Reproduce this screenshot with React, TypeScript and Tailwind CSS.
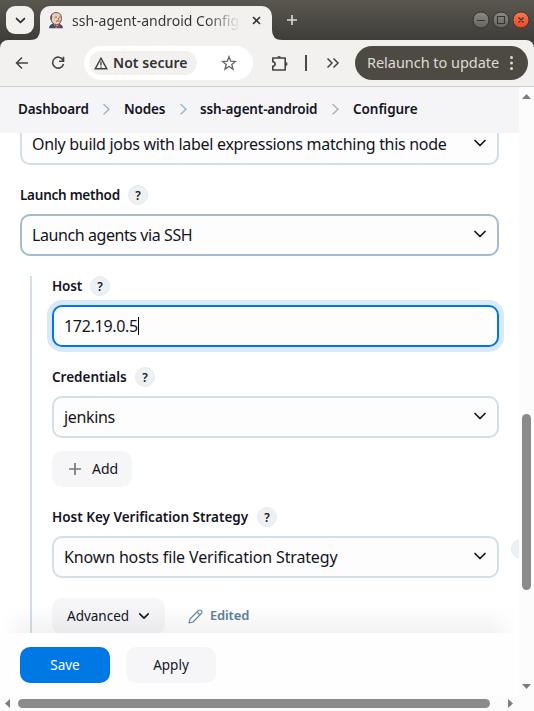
import type { ReactNode } from "react";

function Chevron({ className = "", size = 14, stroke = 1.9 }: { className?: string; size?: number; stroke?: number }) {
  return (
    <svg className={className} width={size} height={size} viewBox="0 0 14 14" fill="none" stroke="currentColor" strokeWidth={stroke} strokeLinecap="round" strokeLinejoin="round">
      <path d="M2 4.500 7 9.500 12 4.500" />
    </svg>
  );
}

function JenkinsIcon() {
  return (
    <svg width="16" height="17" viewBox="0 0 16 17" className="shrink-0">
      <path d="M1 16.2c.2-2.600 1.600-3.900 4.200-4.700l6 .2c2.300.7 3.500 2 3.800 4.500z" fill="#31516a" />
      <path d="M5.500 11.300 8 16.200l3.200-4.600z" fill="#f5f1ed" />
      <path d="M3 6.800C2.500 3 4.700.6 8 .6c3.500 0 5.700 2.300 5.400 6-.1 3.600-1.600 6-4.800 6C5.400 12.600 3.200 10.300 3 6.800z" fill="#e9ccb3" stroke="#49372f" strokeWidth=".8" />
      <path d="M3 8.200C1.800 7.200 2 3.300 4.100 2c-.2 1.700.5 3-.2 4.200z" fill="#65564d" />
      <path d="M6.800 5.300 8.900 5M11 5l1.600.2M8.100 9.300c1.200-.5 2.500-.5 3.500 0M10.200 6.100l.5 1.600" stroke="#67483a" strokeWidth=".8" fill="none" />
      <path d="m7 12.700 2.200 1 2.600-1.200v3l-2.500-.8L7 15.800z" fill="#d52c34" />
    </svg>
  );
}

function Help() {
  return (
    <span className="flex size-5 items-center justify-center rounded-full border border-[#e6ebef] bg-[#edf1f4] pt-px text-[12px] font-semibold leading-none text-[#14141f]">
      ?
    </span>
  );
}

function Label({ children, width }: { children: ReactNode; width: string }) {
  return (
    <div className="flex h-5 items-center gap-2">
      <span className={`${width} whitespace-nowrap text-[13.5px] font-semibold leading-5`}>{children}</span>
      <Help />
    </div>
  );
}

function Select({ children, border = "border-[#d3dee6]" }: { children: ReactNode; border?: string }) {
  return (
    <div className={`flex h-[42px] shrink-0 items-center justify-between rounded-[10px] border-2 bg-[#fdfdfd] pl-2.5 pr-[10px] ${border}`}>
      <span className="whitespace-nowrap text-[16px]">{children}</span>
      <Chevron size={14} stroke={1.7} className="mb-0.5" />
    </div>
  );
}

function TitleBar() {
  return (
    <div className="flex h-10 bg-gradient-to-b from-[#5a5750] to-[#3f3d38]">
      <div className="flex w-10 justify-center pt-1.5">
        <div className="flex size-7 items-center justify-center rounded-[9px] bg-[#f2f1f0] text-[#2d2d2d]">
          <Chevron size={11} stroke={2.2} />
        </div>
      </div>
      <div className="relative mt-1.5 flex h-[34px] w-[232px] items-center rounded-t-[10px] bg-[#f2f1f0] pl-2 pb-1.5">
        <svg className="absolute -left-2.5 bottom-0" width="10" height="10"><path d="M10 0v10H0Q10 10 10 0" fill="#f2f1f0" /></svg>
        <svg className="absolute -right-2.5 bottom-0" width="10" height="10"><path d="M0 0v10h10Q0 10 0 0" fill="#f2f1f0" /></svg>
        <JenkinsIcon />
        <span className="ml-2 w-[168px] overflow-hidden whitespace-nowrap bg-gradient-to-r from-[#35352f] from-80% to-transparent to-100% bg-clip-text text-[14px] text-transparent">ssh-agent-android Config</span>
        <svg className="ml-3" width="9" height="9" viewBox="0 0 9 9" stroke="#393939" strokeWidth="1.7"><path d="m1 1 7 7M8 1 1 8" /></svg>
      </div>
      <svg className="ml-[15px] mt-[15px]" width="10" height="10" stroke="#dfdbd2" strokeWidth="1.6"><path d="M5 0v10M0 5h10" /></svg>
      <svg className="ml-auto mr-1 mt-[11px]" width="58" height="18" fill="none">
        <defs>
          <linearGradient id="gray" x2="0" y2="1"><stop stopColor="#8d8b84" /><stop offset="1" stopColor="#65635b" /></linearGradient>
          <linearGradient id="red" x2="0" y2="1"><stop stopColor="#f57a58" /><stop offset="1" stopColor="#ed4621" /></linearGradient>
        </defs>
        <circle cx="9" cy="9" r="8" fill="url(#gray)" stroke="#36342f" />
        <circle cx="29" cy="9" r="8" fill="url(#gray)" stroke="#36342f" />
        <circle cx="49" cy="9" r="8" fill="url(#red)" stroke="#4b342a" />
        <path d="M5 9.500h8M25.500 5.500h7v7h-7zM46.500 6.500l5 5m0-5-5 5" stroke="#363530" strokeWidth="1.1" />
      </svg>
    </div>
  );
}

function Toolbar() {
  return (
    <div className="bg-[#3f3d38]">
      <div className="flex h-[47px] items-center rounded-t-[8px] border-b border-[#cfcecb] bg-[#f2f1f0] text-[#43433f]">
        <svg className="ml-[15px]" width="14" height="14" viewBox="0 0 14 14" fill="none" stroke="currentColor" strokeWidth="1.500"><path d="M13 7H2M7 1.500 1.500 7 7 12.500" /></svg>
        <svg className="ml-[22px]" width="14" height="14" viewBox="0 0 14 14" fill="none" stroke="currentColor" strokeWidth="1.600"><path d="M12 4A5.500 5.500 0 1 0 12.500 8M12.500.8v4.400H8" /></svg>
        <div className="ml-[19px] flex h-[34px] w-[169px] items-center rounded-full bg-white pl-[5px] pr-4">
          <div className="flex h-6 w-[108px] items-center gap-[5px] rounded-full bg-[#f2f1f0] pl-[5px]">
            <svg width="14" height="13" viewBox="0 0 14 13" fill="none" stroke="currentColor" strokeWidth="1.400"><path d="M7 1.200 1.200 11.800h11.600zM7 4.500v4M7 9.400v1.300" /></svg>
            <span className="whitespace-nowrap pb-px text-[14px] font-semibold tracking-[0.05px] text-[#333]">Not secure</span>
          </div>
          <svg className="ml-auto" width="16" height="16" viewBox="0 0 16 16" fill="none" stroke="#696969" strokeWidth="1.400"><path d="m8 1.800 1.700 4.400 4.700.3-3.600 3 1.200 4.600L8 11.500l-4 2.600 1.200-4.600-3.600-3 4.700-.3z" /></svg>
        </div>
        <svg className="ml-[18px]" width="18" height="18" viewBox="0 0 18 18">
          <path d="M1.800 4h12.400v12H1.800v-3.700c1.500-.2 2.300-1 2.300-2.300S3.300 7.900 1.800 7.700z" fill="none" stroke="currentColor" strokeWidth="1.600" strokeLinejoin="round" />
          <path d="M6.200 3.800a1.900 1.900 0 0 1 3.800 0zM14.600 8a1.900 1.900 0 0 1 0 3.800z" fill="currentColor" />
        </svg>
        <span className="ml-4 h-4 w-0.5 bg-[#4b4943]" />
        <svg className="ml-[19px]" width="14" height="12" viewBox="0 0 14 12" fill="none" stroke="currentColor" strokeWidth="1.500"><path d="m1.500 1.500 4.500 4.500-4.500 4.500M7.500 1.500l4.500 4.500-4.500 4.500" /></svg>
        <div className="ml-auto mr-1.5 flex h-[34px] w-[173px] items-center rounded-full bg-[#4d4a43] pl-3 text-[#dfdbd2]">
          <span className="w-[132px] whitespace-nowrap text-[14.5px] tracking-[-0.04px]">Relaunch to update</span>
          <svg className="ml-[10px]" width="5" height="16" fill="currentColor"><circle cx="2.500" cy="2.500" r="1.500" /><circle cx="2.500" cy="8" r="1.500" /><circle cx="2.500" cy="13.500" r="1.500" /></svg>
        </div>
      </div>
    </div>
  );
}

function Separator() {
  return <svg width="7" height="12" viewBox="0 0 7 12" fill="none" stroke="#9db2c5" strokeWidth="1.400" strokeLinecap="round"><path d="m1 1.500 5 4.700L1 11" /></svg>;
}

export default function App() {
  return (
    <div className="flex h-[711px] w-[534px] flex-col overflow-hidden bg-white font-['Noto_Sans','Open_Sans',sans-serif] text-[#14141f]">
      <TitleBar />
      <Toolbar />
      <div className="flex h-[609px]">
        <div className="flex w-[519px] flex-col overflow-hidden">
          <nav className="flex h-[46px] shrink-0 items-center bg-[#f5f5f8] pb-0.5 pl-[18px] text-[13.5px] font-semibold">
            <span className="w-[85px] whitespace-nowrap tracking-[-0.1px]">Dashboard</span>
            <Separator />
            <span className="ml-3.5 w-[56px] whitespace-nowrap tracking-[-0.15px]">Nodes</span>
            <Separator />
            <span className="ml-[13px] w-[132px] whitespace-nowrap tracking-[-0.16px]">ssh-agent-android</span>
            <Separator />
            <span className="ml-3.5 whitespace-nowrap tracking-[-0.05px]">Configure</span>
          </nav>
          <main className="flex h-[500px] shrink-0 overflow-hidden">
            <div className="-mt-2.5 ml-5 flex h-[511px] w-[479px] shrink-0 flex-col">
              <Select><span className="tracking-[-0.3px]">Only build jobs with label expressions matching this node</span></Select>
              <div className="mb-[9px] mt-5"><Label width="w-[100px] tracking-[-0.25px]">Launch method</Label></div>
              <Select border="border-[#a7bacb]"><span className="tracking-[-0.42px]">Launch agents via SSH</span></Select>
              <section className="ml-2.5 mt-5 flex flex-col border-l-2 border-[#d3dfe6] pl-5">
                <Label width="w-[30px] tracking-[-0.15px]">Host</Label>
                <div className="mt-[9px] flex h-[42px] items-center rounded-[10px] border-2 border-[#0078e3] bg-[#fdfdfd] pl-2.5 text-[16px] ring-5 ring-[#d9e9fa]">
                  <span className="tracking-[-0.3px]">172.19.0.5</span><span className="h-[18px] w-px bg-black" />
                </div>
                <div className="mb-[9px] mt-5"><Label width="w-[75px]">Credentials</Label></div>
                <Select><span className="tracking-[-0.35px]">jenkins</span></Select>
                <div className="mt-[13px] flex h-9 w-20 items-center rounded-[10px] bg-[#f6f6f9] pb-px pl-[17px] text-[14px]">
                  <svg width="12" height="12" stroke="#77777d" strokeWidth="1.700"><path d="M6 0v12M0 6h12" /></svg>
                  <span className="ml-[11px]">Add</span>
                </div>
                <div className="mb-[9px] mt-5"><Label width="w-[197px]">Host Key Verification Strategy</Label></div>
                <Select><span className="tracking-[-0.15px]">Known hosts file Verification Strategy</span></Select>
                <div className="mt-5 flex h-9 items-center">
                  <div className="flex h-9 w-[113px] items-center rounded-[10px] bg-[#f6f6f9] pl-[15px] text-[13.5px]">
                    <span className="w-[71px]">Advanced</span><Chevron size={12} stroke={1.8} />
                  </div>
                  <svg className="ml-[23px]" width="15" height="15" viewBox="0 0 15 15" fill="none" stroke="#6689a4" strokeWidth="1.100" strokeLinejoin="round"><path d="m1 14 1-4L10.500 1.500Q12 .5 13.300 1.700T13.300 4.500L5 13zM9 3l3 3" /></svg>
                  <span className="ml-[7px] text-[13px] font-semibold tracking-[-0.15px] text-[#5d819d]">Edited</span>
                </div>
              </section>
            </div>
            <div className="ml-3 mt-[406px] h-5 w-2 shrink-0 overflow-hidden"><div className="size-5 rounded-full border border-[#e6ebef] bg-[#edf1f4]" /></div>
          </main>
          <footer className="relative flex h-[63px] shrink-0 gap-4 bg-[#fefefe] pl-5 pt-3.5 text-[13.5px]">
            <div className="pointer-events-none absolute inset-x-0 -top-7 h-7 bg-gradient-to-t from-black/5 to-transparent [mask-image:linear-gradient(to_right,transparent,black_30px,black_490px,transparent)]" />
            <button className="h-9 w-[90px] rounded-[10px] bg-[#0078e3] text-white">Save</button>
            <button className="h-9 w-[90px] rounded-[10px] bg-[#f6f6f9]">Apply</button>
          </footer>
        </div>
        <div className="flex w-[15px] flex-col items-center bg-[#fcfcfc] pt-[7px]">
          <svg width="9" height="5"><path d="M0 5 4.500 0 9 5" fill="#7d7d7d" /></svg>
          <div className="mt-[315px] h-[176px] w-[9px] rounded-full bg-[#8b8b8b]" />
          <svg className="mt-[94px]" width="9" height="5"><path d="M0 0h9L4.500 5" fill="#7d7d7d" /></svg>
        </div>
      </div>
      <div className="flex h-[15px] items-center bg-[#fcfcfc] pl-[5px]">
        <svg width="5" height="9"><path d="M5 0 0 4.500 5 9" fill="#7d7d7d" /></svg>
        <div className="ml-2 h-[9px] w-[472px] rounded-full bg-[#8b8b8b]" />
        <svg className="ml-[18px]" width="5" height="9"><path d="m0 0 5 4.500L0 9" fill="#7d7d7d" /></svg>
      </div>
    </div>
  );
}
